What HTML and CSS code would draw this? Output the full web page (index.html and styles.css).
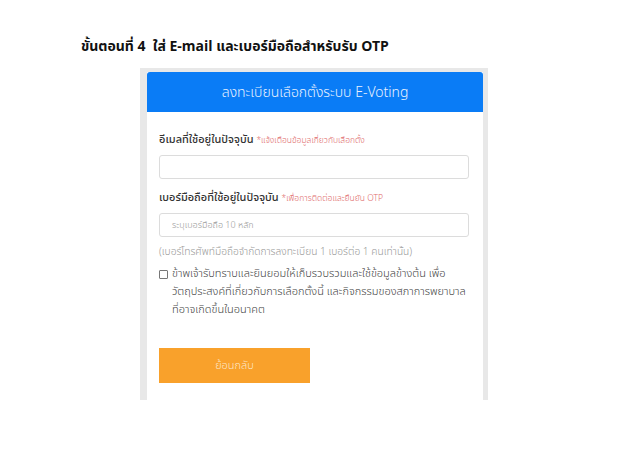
FILE: index.html
```html
<!DOCTYPE html>
<html lang="th">
<head>
<meta charset="utf-8">
<link rel="stylesheet" href="styles.css">
</head>
<body>
<h1 class="step-title">ขั้นตอนที่ 4&nbsp; ใส่ E-mail และเบอร์มือถือสำหรับรับ OTP</h1>
<div class="frame">
  <div class="card">
    <div class="card-head">ลงทะเบียนเลือกตั้งระบบ E-Voting</div>
    <div class="card-body">
      <div class="field">
        <div class="label">อีเมลที่ใช้อยู่ในปัจจุบัน <span class="hint">*แจ้งเตือนข้อมูลเกี่ยวกับเลือกตั้ง</span></div>
        <div class="input"></div>
      </div>
      <div class="field field-last">
        <div class="label">เบอร์มือถือที่ใช้อยู่ในปัจจุบัน <span class="hint">*เพื่อการติดต่อและยืนยัน OTP</span></div>
        <div class="input"><span class="placeholder">ระบุเบอร์มือถือ 10 หลัก</span></div>
      </div>
      <div class="note">(เบอร์โทรศัพท์มือถือจำกัดการลงทะเบียน 1 เบอร์ต่อ 1 คนเท่านั้น)</div>
      <div class="consent">
        <span class="box"></span>
        <span class="consent-text">ข้าพเจ้ารับทราบและยินยอมให้เก็บรวบรวมและใช้ข้อมูลข้างต้น เพื่อ<br>วัตถุประสงค์ที่เกี่ยวกับการเลือกตั้งนี้ และกิจกรรมของสภาการพยาบาล<br>ที่อาจเกิดขึ้นในอนาคต</span>
      </div>
      <div class="btn">ย้อนกลับ</div>
    </div>
  </div>
</div>
</body>
</html>
```

FILE: styles.css
```css
html, body {
  margin: 0;
  padding: 0;
  background: #ffffff;
}
body {
  font-family: "Noto Sans Thai", "Noto Sans", "DejaVu Sans", sans-serif;
  color: #222;
}
.step-title {
  margin: 0;
  padding: 36px 0 0 81px;
  font-size: 14px;
  font-weight: 700;
  color: #111;
  line-height: 22px;
  height: 32px;
}
.frame {
  margin-left: 140px;
  width: 348px;
  box-sizing: border-box;
  background: #e8e8e8;
  padding: 4px 5px 0 7px;
  height: 332px;
}
.card {
  background: #fff;
  height: 100%;
  display: flex;
  flex-direction: column;
}
.card-head {
  background: #0a7cf6;
  color: #e8f1ff;
  height: 40px;
  border-radius: 3px 3px 0 0;
  display: flex;
  align-items: center;
  justify-content: center;
  font-size: 14px;
  font-weight: 300;
}
.card-body {
  padding: 20px 14px 0 12px;
  display: flex;
  flex-direction: column;
}
.field {
  display: flex;
  flex-direction: column;
  gap: 6px;
  margin-bottom: 11px;
}
.field-last {
  margin-bottom: 8px;
}
.label {
  font-size: 11px;
  font-weight: 500;
  color: #333;
  line-height: 16px;
}
.hint {
  font-size: 8.5px;
  font-weight: 300;
  color: #e06a6a;
}
.input {
  height: 24px;
  border: 1px solid #dcdcdc;
  border-radius: 3px;
  box-sizing: border-box;
  display: flex;
  align-items: center;
  padding-left: 12px;
}
.placeholder {
  font-size: 9px;
  font-weight: 300;
  color: #999;
}
.note {
  font-size: 10.2px;
  font-weight: 300;
  color: #999;
  line-height: 14px;
  white-space: nowrap;
}
.consent {
  display: flex;
  gap: 4px;
  margin-top: 6px;
  font-size: 11px;
  font-weight: 300;
  color: #444;
  line-height: 18px;
  white-space: nowrap;
}
.box {
  flex: none;
  width: 7px;
  height: 7px;
  border: 1px solid #777;
  border-radius: 1px;
  margin-top: 5px;
}
.btn {
  margin-top: 29px;
  width: 151px;
  height: 35px;
  background: #f9a12b;
  color: #fde6c8;
  display: flex;
  align-items: center;
  justify-content: center;
  font-size: 11px;
  font-weight: 300;
}
```
